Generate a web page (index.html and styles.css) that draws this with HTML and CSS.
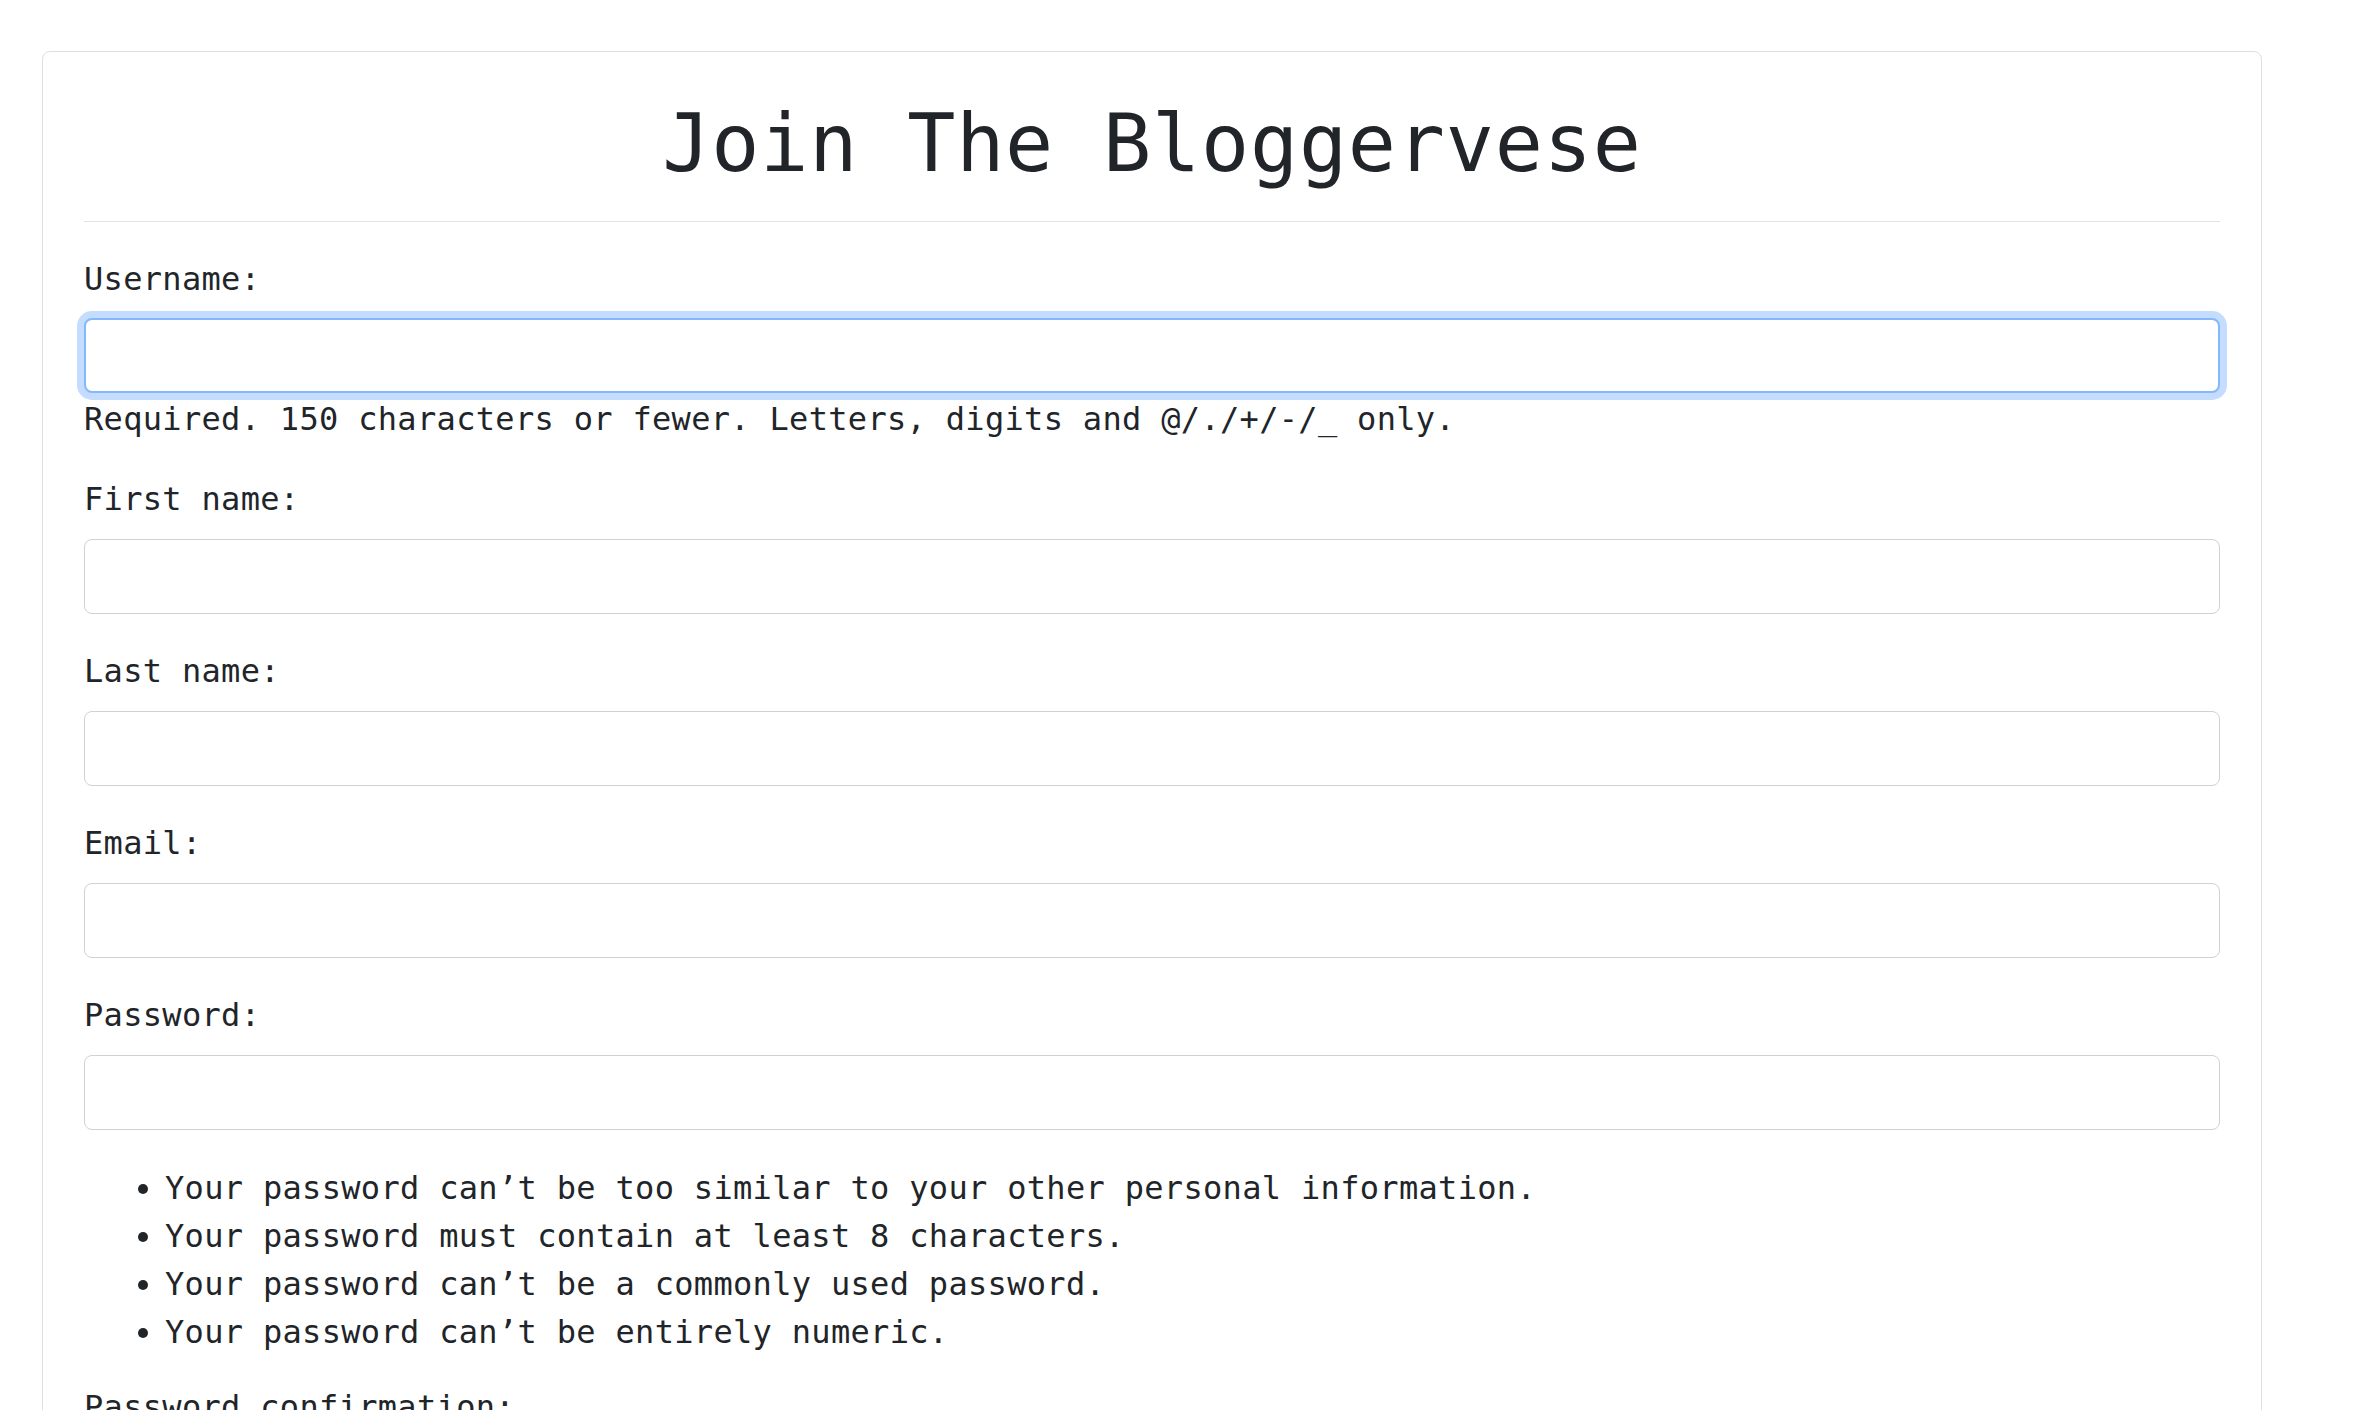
FILE: index.html
```html
<!DOCTYPE html>
<html lang="en">
<head>
<meta charset="utf-8">
<title>Join The Bloggervese</title>
<link rel="stylesheet" href="styles.css">
</head>
<body>
<main class="card">
  <h1 class="title">Join The Bloggervese</h1>
  <hr class="divider">
  <form class="signup" action="#" method="post">
    <div class="field">
      <label class="label" for="id_username">Username:</label>
      <input class="input is-focused" type="text" id="id_username" name="username">
      <div class="help">Required. 150 characters or fewer. Letters, digits and @/./+/-/_ only.</div>
    </div>
    <div class="field">
      <label class="label" for="id_first_name">First name:</label>
      <input class="input" type="text" id="id_first_name" name="first_name">
    </div>
    <div class="field">
      <label class="label" for="id_last_name">Last name:</label>
      <input class="input" type="text" id="id_last_name" name="last_name">
    </div>
    <div class="field">
      <label class="label" for="id_email">Email:</label>
      <input class="input" type="email" id="id_email" name="email">
    </div>
    <div class="field">
      <label class="label" for="id_password1">Password:</label>
      <input class="input" type="password" id="id_password1" name="password1">
      <ul class="rules">
        <li>Your password can’t be too similar to your other personal information.</li>
        <li>Your password must contain at least 8 characters.</li>
        <li>Your password can’t be a commonly used password.</li>
        <li>Your password can’t be entirely numeric.</li>
      </ul>
    </div>
    <div class="field">
      <label class="label" for="id_password2">Password confirmation:</label>
      <input class="input" type="password" id="id_password2" name="password2">
    </div>
  </form>
</main>
</body>
</html>
```

FILE: styles.css
```css
html, body {
  margin: 0;
  padding: 0;
  background: #ffffff;
}

body {
  font-family: "DejaVu Sans Mono", "Liberation Mono", monospace;
  font-size: 32px;
  line-height: 48px;
  letter-spacing: 0.32px;
  color: #212529;
}

.card {
  box-sizing: border-box;
  width: 2220px;
  margin: 51px 0 0 42px;
  padding: 44px 41px 60px 41px;
  border: 1px solid #dfdfdf;
  border-radius: 8px;
}

.title {
  margin: 0 0 29px 0;
  font-size: 80px;
  line-height: 96px;
  font-weight: 400;
  letter-spacing: 0.8px;
  text-align: center;
}

.divider {
  margin: 0;
  border: 0;
  border-top: 1px solid #e3e3e3;
  height: 0;
}

.signup {
  display: flex;
  flex-direction: column;
  padding-top: 33px;
}

.field {
  display: flex;
  flex-direction: column;
}

.label {
  display: block;
  margin-bottom: 15px;
}

.field + .field .label {
  margin-bottom: 16px;
}

.input {
  box-sizing: border-box;
  display: block;
  width: 100%;
  height: 75px;
  margin: 0 0 33px 0;
  padding: 0 24px;
  font: inherit;
  color: #212529;
  background: #ffffff;
  border: 1px solid #ccd2d8;
  border-radius: 8px;
  outline: none;
}

.input.is-focused {
  border: 2px solid #86b7fe;
  box-shadow: 0 0 0 7px #c4dcfe;
  margin-bottom: 0;
}

.help {
  margin-top: 6px;
  margin-bottom: 36px;
  line-height: 40px;
}

.rules {
  margin: 1px 0 27px 0;
  padding: 0 0 0 81px;
}

.rules li {
  line-height: 48px;
}
```
